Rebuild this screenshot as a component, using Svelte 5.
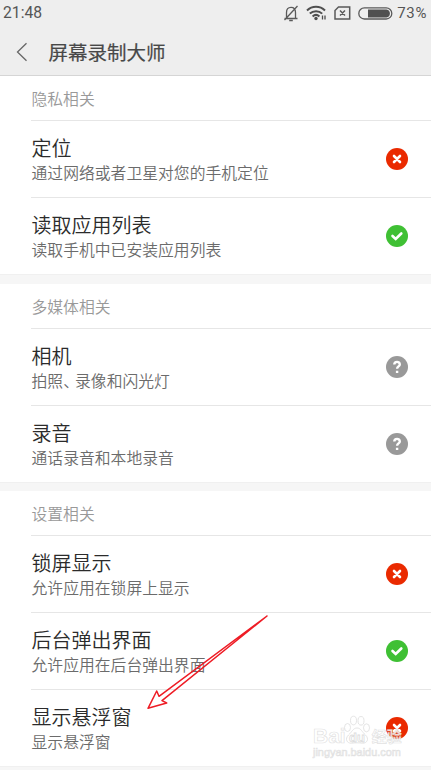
<script lang="ts">
    type Status = 'deny' | 'allow' | 'ask';

    const sections: { title: string; items: { name: string; desc: string; status: Status }[] }[] = [
        {
            title: '隐私相关',
            items: [
                { name: '定位', desc: '通过网络或者卫星对您的手机定位', status: 'deny' },
                { name: '读取应用列表', desc: '读取手机中已安装应用列表', status: 'allow' },
            ],
        },
        {
            title: '多媒体相关',
            items: [
                { name: '相机', desc: '拍照、录像和闪光灯', status: 'ask' },
                { name: '录音', desc: '通话录音和本地录音', status: 'ask' },
            ],
        },
        {
            title: '设置相关',
            items: [
                { name: '锁屏显示', desc: '允许应用在锁屏上显示', status: 'deny' },
                { name: '后台弹出界面', desc: '允许应用在后台弹出界面', status: 'allow' },
                { name: '显示悬浮窗', desc: '显示悬浮窗', status: 'deny' },
            ],
        },
    ];
</script>

<div class="screen">
    <header>
        <div class="status-bar">
            <span class="time">21:48</span>
            <div class="indicators">
                <!-- muted bell -->
                <svg class="bell" width="16" height="17" viewBox="0 0 16 17" fill="none" stroke="#5a5a5a" stroke-width="1.3">
                    <path d="M1.5 13.500h13M3.500 13.200V7.500C3.500 4 5 2.300 8 2.300s4.500 1.700 4.500 5.200v5.700M6.200 15.500h3.600M1.500 15L14.500 1" />
                </svg>
                <svg class="wifi" width="21" height="16" viewBox="0 0 21 16" fill="none" stroke="#4f4f4f" stroke-width="2">
                    <path d="M1 5.500C6 .600 14 .600 19 5.500M3.800 8.600c3.500-3.300 9-3.300 12.400 0M6.600 11.400c2-1.800 4.800-1.800 6.800 0" />
                    <circle cx="10" cy="13.500" r="1.700" fill="#4f4f4f" stroke="none" />
                    <path d="M16.500 10.500v4M19 10.500v4" stroke-width="1.300" />
                </svg>
                <svg class="sim" width="17" height="14" viewBox="0 0 17 14" fill="none" stroke="#5a5a5a" stroke-width="1.500">
                    <path d="M4.500 1H15.700V12.900H1V4.500ZM6 4.500l5 5M11 4.500l-5 5" />
                </svg>
                <svg class="battery" width="35" height="13" viewBox="0 0 35 13">
                    <rect x=".8" y=".8" width="33" height="11.200" rx="5.600" fill="none" stroke="#5a5a5a" stroke-width="1.300" />
                    <path d="M10 2.500h18.500a4 4 0 0 1 0 7.900H10z" fill="#505050" />
                </svg>
                <span class="percent">73%</span>
            </div>
        </div>
        <div class="title-bar">
            <svg width="12" height="20" viewBox="0 0 12 20" fill="none" stroke="#666" stroke-width="1.300">
                <path d="M10.500 1.200L1.500 10l9 8.800" />
            </svg>
            <h1>屏幕录制大师</h1>
        </div>
    </header>

    {#each sections as section}
        <section>
            <h2>{section.title}</h2>
            {#each section.items as item}
                <div class="item">
                    <div class="text">
                        <div class="name">{item.name}</div>
                        <div class="desc">
                            {#each item.desc as ch}{#if ch === '、'}<span class="comma">{ch}</span>{:else}{ch}{/if}{/each}
                        </div>
                    </div>
                    <svg class="icon {item.status}" width="22" height="22" viewBox="0 0 22 22">
                        <circle cx="11" cy="11" r="11" />
                        {#if item.status === 'deny'}
                            <path d="M8 8l6 6M14 8l-6 6" />
                        {:else if item.status === 'allow'}
                            <path d="M6.500 11l3.200 3 5.600-5.500" />
                        {:else}
                            <path d="M8.300 8.600c0-3.600 5.500-3.500 5.500-.2 0 2.100-2.700 2-2.700 4.400M11.100 14.800v2.300" class="question" />
                        {/if}
                    </svg>
                </div>
            {/each}
        </section>
    {/each}

    <!-- pointer to the floating window permission -->
    <svg class="arrow" width="124" height="98" viewBox="0 0 124 98" fill="none" stroke="#ee1c25" stroke-width="1.500" stroke-linejoin="round">
        <path d="M121 2L13 82.300 10.700 77 2 94.300 20.700 89 16 86.700Z" />
    </svg>

    <div class="watermark">
        <div class="brand">
            <span>Bai</span>
            <svg width="28" height="30" viewBox="0 0 28 30">
                <ellipse cx="4.500" cy="12.500" rx="3" ry="4" />
                <ellipse cx="10.500" cy="5.500" rx="3" ry="4.300" />
                <ellipse cx="18" cy="5.800" rx="3" ry="4.300" />
                <ellipse cx="23.500" cy="12.800" rx="3" ry="4" />
                <path d="M14 13c-4 0-5 4-8.500 7-4 4-1.500 8.500 3 8.200 4-.5 7-.5 11 0 4.500.3 7-4.200 3-8.200C19 17 18 13 14 13z" />
                <text x="14" y="26.500" text-anchor="middle">du</text>
            </svg>
            <span class="cjk">经验</span>
        </div>
        <div class="url">jingyan.baidu.com</div>
    </div>
</div>

<style>
    :global(body) {
        background: #f5f5f5;
    }
    .screen {
        position: relative;
        height: 770px;
        overflow: hidden;
        background: #f6f6f6;
        font-family: "Noto Sans CJK SC", sans-serif;
    }
    header {
        box-sizing: border-box;
        height: 76px;
        background: #eee;
        border-bottom: 1px solid #d5d5d5;
    }
    .status-bar {
        display: flex;
        align-items: center;
        justify-content: space-between;
        height: 26px;
        padding: 0 4px 0 3px;
        font-family: Roboto, sans-serif;
        color: #555;
    }
    .time {
        font-size: 15.7px;
        line-height: 26px;
    }
    .indicators {
        display: flex;
        align-items: center;
    }
    .bell {
        margin-right: 7px;
    }
    .wifi {
        margin-right: 7px;
    }
    .sim {
        margin-right: 7px;
    }
    .battery {
        margin-right: 4px;
    }
    .percent {
        font-size: 15px;
        letter-spacing: 0.6px;
    }
    .title-bar {
        display: flex;
        align-items: center;
        height: 51px;
        padding-left: 16px;
    }
    h1 {
        margin: 1px 0 0 20.5px;
        font-size: 19.5px;
        font-weight: 400;
        line-height: 28px;
        color: #484848;
        -webkit-text-stroke: 0.2px #484848;
    }
    section {
        margin-bottom: 8.5px;
        background: #fff;
    }
    h2 {
        box-sizing: border-box;
        height: 45px;
        margin: 0 0 0 31px;
        border-bottom: 1px solid #e6e6e6;
        font-size: 15.8px;
        font-weight: 350;
        line-height: 46px;
        text-indent: 0.5px;
        color: #999;
    }
    .item {
        display: flex;
        align-items: center;
        justify-content: space-between;
        box-sizing: border-box;
        height: 77px;
        margin-left: 31px;
        padding-right: 23px;
        border-bottom: 1px solid #e6e6e6;
    }
    .item:last-child {
        margin-left: 0;
        padding-left: 31px;
        border-bottom-color: #f0f0f0;
    }
    .text {
        padding: 1px 0 0 0.5px;
    }
    .name {
        font-size: 20px;
        font-weight: 350;
        line-height: 26px;
        color: #2b2b2b;
    }
    .desc {
        font-size: 15.8px;
        font-weight: 350;
        line-height: 23px;
        color: #6b6b6b;
    }
    .comma {
        margin-right: 4px;
        font-feature-settings: "halt";
    }
    .icon path {
        fill: none;
        stroke: #fff;
        stroke-width: 2.6;
        stroke-linecap: round;
    }
    .icon .question {
        stroke-width: 2.4;
        stroke-linecap: butt;
    }
    .deny {
        fill: #ea2a00;
    }
    .allow {
        fill: #3fc034;
    }
    .ask {
        fill: #999;
    }
    .arrow {
        position: absolute;
        left: 146px;
        top: 614px;
    }
    .watermark {
        position: absolute;
        left: 313px;
        top: 715px;
        font-family: "Liberation Sans", sans-serif;
        color: rgba(255, 255, 255, 0.85);
        -webkit-text-stroke: 0.7px rgba(205, 205, 205, 0.6);
    }
    .brand {
        display: flex;
        align-items: flex-end;
        height: 30px;
        font-size: 21px;
        font-weight: bold;
        line-height: 18px;
    }
    .brand svg {
        margin-left: -3px;
        fill: rgba(255, 255, 255, 0.85);
        stroke: #ddd;
        stroke-width: 0.8;
    }
    .brand text {
        font-size: 13px;
        -webkit-text-stroke: 0;
    }
    .brand .cjk {
        margin-left: 1px;
        font-family: "Noto Sans CJK SC", sans-serif;
        font-size: 15px;
        line-height: 19px;
    }
    .url {
        margin-top: 1px;
        font-size: 10.9px;
        line-height: 13px;
    }
</style>
